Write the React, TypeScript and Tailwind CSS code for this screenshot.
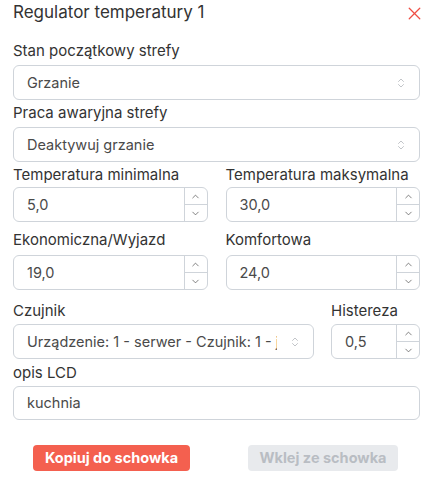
import { ChevronUp, ChevronDown, ChevronsUpDown, X } from "lucide-react";

const font = { fontFamily: "Inter, 'Noto Sans', sans-serif" };

function Label({ children, mb = "mb-[3px]" }: { children: React.ReactNode; mb?: string }) {
  return <div className={`h-[20px] text-[15px] leading-[20px] text-[#333] ${mb}`}>{children}</div>;
}

function Select({ value }: { value: string }) {
  return (
    <div className="flex h-[35px] items-center rounded-[6px] border border-[#cfd4da] bg-white pl-[13px] pr-[12px]">
      <span className="flex-1 overflow-hidden whitespace-nowrap text-[14.5px] text-[#4a4a4a]">{value}</span>
      <ChevronsUpDown size={12} strokeWidth={1.3} className="ml-3 shrink-0 text-[#a0a5ab]" />
    </div>
  );
}

function NumberInput({ value }: { value: string }) {
  return (
    <div className="flex h-[35px] rounded-[6px] border border-[#cfd4da] bg-white">
      <span className="flex flex-1 items-center pl-[13px] text-[14.5px] text-[#4a4a4a]">{value}</span>
      <div className="flex w-[23px] flex-col border-l border-[#cfd4da]">
        <div className="flex flex-1 items-center justify-center border-b border-[#cfd4da]">
          <ChevronUp size={11} strokeWidth={1.6} className="text-[#555]" />
        </div>
        <div className="flex flex-1 items-center justify-center">
          <ChevronDown size={11} strokeWidth={1.6} className="text-[#555]" />
        </div>
      </div>
    </div>
  );
}

export default function App() {
  return (
    <div className="h-[484px] w-[430px] bg-white pl-[13px] pr-[10px] pt-[2px]" style={font}>
      <div className="flex h-[22px] items-center justify-between">
        <span className="text-[17px] text-[#333]">Regulator temperatury 1</span>
        <X size={21} strokeWidth={1.5} color="#ef4e44" className="mr-[-5px]" />
      </div>

      <div className="mt-[17px]">
        <Label mb="mb-[4px]">Stan początkowy strefy</Label>
        <Select value="Grzanie" />
      </div>
      <div className="mt-[3px]">
        <Label mb="mb-[4px]">Praca awaryjna strefy</Label>
        <Select value="Deaktywuj grzanie" />
      </div>

      <div className="mt-[3px] grid grid-cols-2 gap-x-[18px]">
        <div>
          <Label mb="mb-[2px]">Temperatura minimalna</Label>
          <NumberInput value="5,0" />
        </div>
        <div>
          <Label mb="mb-[2px]">Temperatura maksymalna</Label>
          <NumberInput value="30,0" />
        </div>
      </div>

      <div className="mt-[8px] grid grid-cols-2 gap-x-[18px]">
        <div>
          <Label mb="mb-[5px]">Ekonomiczna/Wyjazd</Label>
          <NumberInput value="19,0" />
        </div>
        <div>
          <Label mb="mb-[5px]">Komfortowa</Label>
          <NumberInput value="24,0" />
        </div>
      </div>

      <div className="mt-[11px] flex gap-x-[17px]">
        <div className="min-w-0 flex-1">
          <Label>Czujnik</Label>
          <Select value="Urządzenie: 1 - serwer - Czujnik: 1 - jedynka" />
        </div>
        <div className="w-[89px]">
          <Label>Histereza</Label>
          <NumberInput value="0,5" />
        </div>
      </div>

      <div className="mt-[4px]">
        <Label>opis LCD</Label>
        <div className="flex h-[34px] items-center rounded-[6px] border border-[#cfd4da] bg-white pl-[13px] text-[14.5px] text-[#4a4a4a]">
          kuchnia
        </div>
      </div>

      <div className="mt-[25px] flex">
        <div className="ml-[20px] flex h-[26px] w-[157px] items-center justify-center rounded-[4px] bg-[#f4604f] text-[14.5px] font-bold text-white">
          Kopiuj do schowka
        </div>
        <div className="ml-[58px] flex h-[26px] w-[150px] items-center justify-center rounded-[4px] bg-[#e8eaed] text-[14.5px] font-bold text-[#b9bdc3]">
          Wklej ze schowka
        </div>
      </div>
    </div>
  );
}
